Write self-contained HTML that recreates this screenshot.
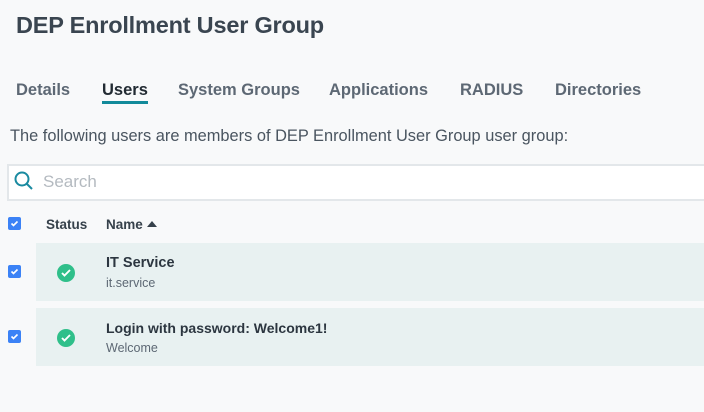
<!DOCTYPE html>
<html><head><style>
body{margin:0;width:704px;height:412px;background:#f8f9fa;font-family:"Liberation Sans",sans-serif;color:#36414b;position:relative;overflow:hidden}
.a{position:absolute;white-space:nowrap}
h1{position:absolute;left:16px;top:12px;margin:0;font-size:23.5px;font-weight:600;color:#3a4550;letter-spacing:-0.2px}
.tab{position:absolute;top:81px;font-size:16.5px;font-weight:600;color:#5d6874}
.cb{position:absolute;left:8px;width:13px;height:13px;background:#3b82f6;border-radius:2px}
.cb svg{position:absolute;left:1px;top:1px}
.row{position:absolute;left:36px;width:668px;height:58px;background:#e8f1f1}
.ok{position:absolute;left:57px;width:18px;height:18px;border-radius:50%;background:#2fbf8a}
.ok svg{position:absolute;left:4px;top:4px}
</style></head><body>
<h1>DEP Enrollment User Group</h1>
<div class="tab" style="left:16px">Details</div>
<div class="tab" style="left:102px;color:#222b33">Users</div>
<div class="a" style="left:102px;top:101px;width:46px;height:3px;background:#128a9a"></div>
<div class="tab" style="left:178px">System Groups</div>
<div class="tab" style="left:329px">Applications</div>
<div class="tab" style="left:460px">RADIUS</div>
<div class="tab" style="left:555px">Directories</div>
<div class="a" style="left:10px;top:127px;font-size:16.4px;color:#4a5560">The following users are members of DEP Enrollment User Group user group:</div>
<div class="a" style="left:7px;top:164px;width:700px;height:33px;background:#fff;border:2px solid #e3e7ea;border-right:none"></div>
<svg class="a" style="left:14px;top:171px" width="20" height="20" viewBox="0 0 20 20"><circle cx="8" cy="8" r="6.5" fill="none" stroke="#1a8aa0" stroke-width="2"/><path d="M13 13l5 5" stroke="#1a8aa0" stroke-width="2"/></svg>
<div class="a" style="left:43px;top:172px;font-size:17px;color:#b4bac0">Search</div>
<div class="cb" style="top:217px"><svg width="11" height="11"><path d="M2.5 5.5l2 2 4-4" stroke="#fff" stroke-width="1.6" fill="none"/></svg></div>
<div class="a" style="left:46px;top:217px;font-size:13.5px;font-weight:600">Status</div>
<div class="a" style="left:106px;top:217px;font-size:13.5px;font-weight:600">Name</div>
<svg class="a" style="left:147px;top:221px" width="10" height="6"><path d="M0 6L5 0 10 6z" fill="#36414b"/></svg>
<div class="row" style="top:243px"></div>
<div class="cb" style="top:265px"><svg width="11" height="11"><path d="M2.5 5.5l2 2 4-4" stroke="#fff" stroke-width="1.6" fill="none"/></svg></div>
<div class="ok" style="top:264px"><svg width="10" height="10"><path d="M1 5l2.5 2.5L9 2" stroke="#fff" stroke-width="1.9" fill="none"/></svg></div>
<div class="a" style="left:106px;top:255px;font-size:14.5px;font-weight:700;color:#2c3640">IT Service</div>
<div class="a" style="left:106px;top:276px;font-size:12.5px;color:#5d6874">it.service</div>
<div class="row" style="top:308px"></div>
<div class="cb" style="top:330px"><svg width="11" height="11"><path d="M2.5 5.5l2 2 4-4" stroke="#fff" stroke-width="1.6" fill="none"/></svg></div>
<div class="ok" style="top:329px"><svg width="10" height="10"><path d="M1 5l2.5 2.5L9 2" stroke="#fff" stroke-width="1.9" fill="none"/></svg></div>
<div class="a" style="left:106px;top:320px;font-size:14px;font-weight:700;color:#2c3640">Login with password: Welcome1!</div>
<div class="a" style="left:106px;top:341px;font-size:12.5px;color:#5d6874">Welcome</div>
</body></html>
